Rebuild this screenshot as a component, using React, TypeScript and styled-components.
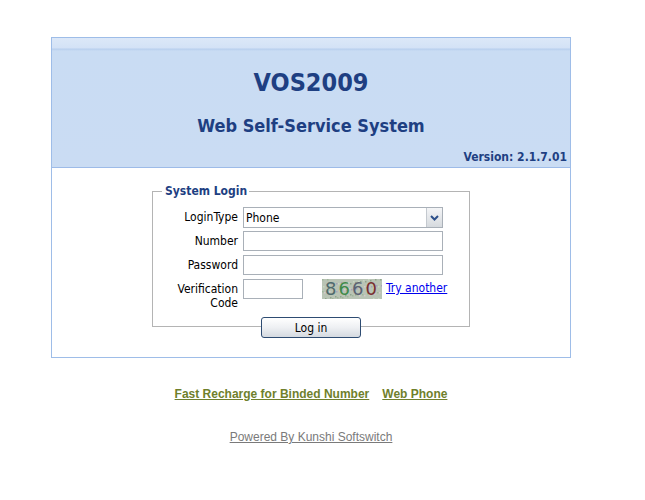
import React from 'react';
import styled, { createGlobalStyle } from 'styled-components';

const GlobalStyle = createGlobalStyle`
    html, body {
        margin: 0;
        padding: 0;
        background: #ffffff;
    }
    body {
        font-family: "DejaVu Sans Condensed", "DejaVu Sans", sans-serif;
        font-size: 12px;
        color: #000;
    }
`;

const Page = styled.div`
    width: 520px;
    margin-left: 51px;
    padding-top: 37px;
`;

const Box = styled.div`
    border: 1px solid #9ebde8;
    height: 319px;
    display: flex;
    flex-direction: column;
    align-items: center;
`;

const Header = styled.div`
    align-self: stretch;
    height: 129px;
    border-bottom: 1px solid #9dbbe8;
    background: linear-gradient(#dce8f8 0px, #d3e2f6 10px, #b8cfee 11px, #c9dcf3 13px, #cadcf3 100%);
    display: flex;
    flex-direction: column;
    align-items: center;
    color: #1e3f82;
    font-family: "DejaVu Sans Condensed", "DejaVu Sans", sans-serif;
    font-weight: bold;
`;

const Title = styled.h1`
    margin: 30px 0 0;
    font-size: 25px;
    line-height: 30px;
`;

const Subtitle = styled.h2`
    margin: 17px 0 0;
    font-size: 18px;
    line-height: 22px;
`;

const Version = styled.div`
    align-self: flex-end;
    margin: 13px 3px 0 0;
    font-size: 12px;
    line-height: 14px;
`;

const Fieldset = styled.fieldset`
    margin: 16px 0 0;
    width: 318px;
    box-sizing: border-box;
    height: 143px;
    border: 1px solid #b4b4b4;
    padding: 9px 0 0 5px;
`;

const Legend = styled.legend`
    margin-left: 4px;
    padding: 0 2px 0 3px;
    color: #1e3f82;
    font-weight: bold;
    font-size: 12px;
`;

const FormGrid = styled.div`
    display: grid;
    grid-template-columns: 80px 200px;
    column-gap: 5px;
    row-gap: 4px;
    align-items: start;
`;

const Label = styled.label`
    text-align: right;
    line-height: 14px;
    padding-top: 3px;
    white-space: nowrap;
`;

const SelectWrap = styled.div`
    position: relative;
    height: 21px;
    margin-bottom: -1px;
`;

const Select = styled.select`
    appearance: none;
    width: 200px;
    height: 21px;
    box-sizing: border-box;
    border: 1px solid #a9b0b8;
    background: #fff;
    font-family: inherit;
    font-size: 12px;
    padding: 0 0 0 2px;
    margin: 0;
    color: #000;
    outline: none;
    border-radius: 0;
`;

const Arrow = styled.span`
    position: absolute;
    right: 1px;
    top: 1px;
    width: 16px;
    height: 19px;
    box-sizing: border-box;
    border-left: 1px solid #c4c9cf;
    background: linear-gradient(#f4f5f7, #d6dade);
    display: flex;
    align-items: center;
    justify-content: center;
    pointer-events: none;
`;

const TextInput = styled.input<{ $width?: number }>`
    width: ${(p) => p.$width ?? 200}px;
    height: 20px;
    box-sizing: border-box;
    border: 1px solid #a9b0b8;
    margin: 0;
    padding: 0 2px;
    font-family: inherit;
    font-size: 12px;
    outline: none;
`;

const CodeRow = styled.div`
    display: flex;
    align-items: flex-start;
    white-space: nowrap;
`;

const Captcha = styled.div`
    position: relative;
    flex: none;
    margin-left: 19px;
    width: 60px;
    height: 20px;
    background: #b9c4b5;
    overflow: hidden;
    display: flex;
    align-items: center;
    justify-content: center;
    letter-spacing: 2px;
    font-family: "DejaVu Sans", sans-serif;
    font-size: 18px;
    line-height: 20px;
`;

const Digit = styled.span<{ $color: string }>`
    position: relative;
    color: ${(p) => p.$color};
`;

const Noise = styled.svg`
    position: absolute;
    inset: 0;
`;

const TryLink = styled.a`
    margin: 1px 0 0 4px;
    color: #0000ee;
    text-decoration: underline;
    line-height: 16px;
    font-size: 12px;
    cursor: pointer;
`;

const LoginButton = styled.button`
    position: relative;
    margin-top: -10px;
    width: 100px;
    height: 21px;
    box-sizing: border-box;
    border: 1px solid #2e4c72;
    border-radius: 3px;
    background: linear-gradient(#ffffff 0%, #eef0f3 50%, #d5dae0 100%);
    font-family: inherit;
    font-size: 12px;
    color: #000;
    padding: 0;
    cursor: pointer;
`;

const Links = styled.div`
    display: flex;
    justify-content: center;
    gap: 13px;
    margin-top: 29px;
    font-family: "Liberation Sans", Arial, sans-serif;
    font-weight: bold;
    font-size: 12px;
`;

const OliveLink = styled.a`
    color: #6f7f2c;
    text-decoration: underline;
    cursor: pointer;
`;

const Footer = styled.div`
    text-align: center;
    margin-top: 29px;
    font-family: "Liberation Sans", Arial, sans-serif;
    font-size: 12px;
`;

const GreyLink = styled.a`
    color: #7a7a7a;
    text-decoration: underline;
    cursor: pointer;
`;

const noiseDots = Array.from({ length: 70 }, (_, i) => ({
    x: (i * 37) % 60,
    y: (i * 13 + (i % 7) * 3) % 20,
    c: ['#9fb59a', '#d8c8cc', '#a8a0b8', '#c9d8c2', '#8fa58c'][i % 5],
}));

export default function App() {
    return (
        <>
            <GlobalStyle />
            <Page>
                <Box>
                    <Header>
                        <Title>VOS2009</Title>
                        <Subtitle>Web Self-Service System</Subtitle>
                        <Version>Version: 2.1.7.01</Version>
                    </Header>
                    <Fieldset>
                        <Legend>System Login</Legend>
                        <FormGrid>
                            <Label>LoginType</Label>
                            <SelectWrap>
                                <Select defaultValue="phone">
                                    <option value="phone">Phone</option>
                                </Select>
                                <Arrow>
                                    <svg width="9" height="6" viewBox="0 0 9 6">
                                        <path d="M1 1 L4.5 4.5 L8 1" fill="none" stroke="#2c4f8a" strokeWidth="2" />
                                    </svg>
                                </Arrow>
                            </SelectWrap>
                            <Label>Number</Label>
                            <TextInput type="text" />
                            <Label>Password</Label>
                            <TextInput type="password" />
                            <Label>
                                Verification
                                <br />
                                Code
                            </Label>
                            <CodeRow>
                                <TextInput type="text" $width={60} />
                                <Captcha>
                                    <Noise width="60" height="20">
                                        {noiseDots.map((d, i) => (
                                            <rect key={i} x={d.x} y={d.y} width="1.5" height="1.5" fill={d.c} />
                                        ))}
                                    </Noise>
                                    <Digit $color="#4f6a6c">8</Digit>
                                    <Digit $color="#3f8a4a">6</Digit>
                                    <Digit $color="#5b6272">6</Digit>
                                    <Digit $color="#7a2e30">0</Digit>
                                </Captcha>
                                <TryLink>Try another</TryLink>
                            </CodeRow>
                        </FormGrid>
                    </Fieldset>
                    <LoginButton>Log in</LoginButton>
                </Box>
                <Links>
                    <OliveLink>Fast Recharge for Binded Number</OliveLink>
                    <OliveLink>Web Phone</OliveLink>
                </Links>
                <Footer>
                    <GreyLink>Powered By Kunshi Softswitch</GreyLink>
                </Footer>
            </Page>
        </>
    );
}
